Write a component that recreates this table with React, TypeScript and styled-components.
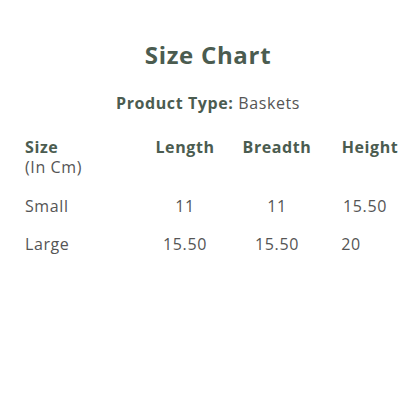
import React from "react";
import styled, { createGlobalStyle } from "styled-components";

const Global = createGlobalStyle`
  body {
    margin: 0;
    background: #fff;
    font-family: "Open Sans", "Noto Sans", sans-serif;
  }
`;

const Page = styled.div`
  width: 416px;
  height: 416px;
  padding-top: 38px;
  box-sizing: border-box;
  display: flex;
  flex-direction: column;
  align-items: center;
`;

const Title = styled.h2`
  margin: 0;
  font-size: 24px;
  font-weight: 700;
  color: #4b5c50;
  line-height: 34px;
  letter-spacing: 0.7px;
`;

const TypeLine = styled.p`
  margin: 20px 0 0;
  font-size: 16px;
  color: #555;
  line-height: 22px;
  letter-spacing: 0.6px;
  b {
    color: #4b5c50;
    font-weight: 700;
  }
`;

const Table = styled.div`
  align-self: stretch;
  margin-top: 23px;
  display: grid;
  grid-template-columns: 115px 90px 94px 92px;
  padding-left: 25px;
`;

const Head = styled.div<{ $left?: boolean }>`
  font-size: 16px;
  font-weight: 700;
  color: #4b5c50;
  line-height: 20px;
  letter-spacing: 0.6px;
  text-align: ${(p) => (p.$left ? "left" : "center")};
  height: 50px;
  span {
    display: block;
    font-weight: 400;
    color: #555;
  }
`;

const Cell = styled.div<{ $left?: boolean; $shift?: number }>`
  font-size: 16px;
  color: #555;
  line-height: 38px;
  letter-spacing: 0.6px;
  text-align: ${(p) => (p.$left ? "left" : "center")};
  position: relative;
  left: ${(p) => p.$shift ?? 0}px;
`;

const rows = [
  { size: "Small", l: "11", b: "11", h: "15.50", hs: -5 },
  { size: "Large", l: "15.50", b: "15.50", h: "20", hs: -19 },
];

export default function App() {
  return (
    <>
      <Global />
      <Page>
        <Title>Size Chart</Title>
        <TypeLine>
          <b>Product Type:</b> Baskets
        </TypeLine>
        <Table>
          <Head $left>
            Size
            <span>(In Cm)</span>
          </Head>
          <Head>Length</Head>
          <Head>Breadth</Head>
          <Head>Height</Head>
          {rows.map((r) => (
            <React.Fragment key={r.size}>
              <Cell $left>{r.size}</Cell>
              <Cell>{r.l}</Cell>
              <Cell>{r.b}</Cell>
              <Cell $shift={r.hs}>{r.h}</Cell>
            </React.Fragment>
          ))}
        </Table>
      </Page>
    </>
  );
}
